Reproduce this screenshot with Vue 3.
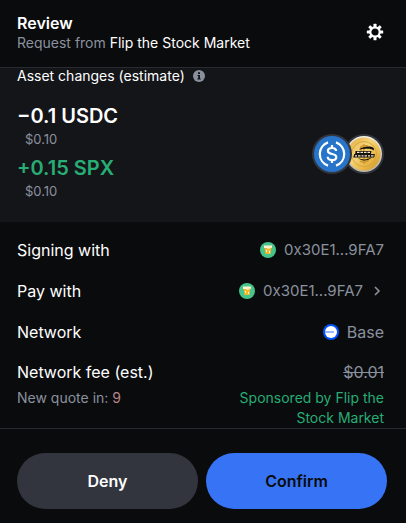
<script setup>
const changes = [
  { amount: '−0.1 USDC', value: '$0.10', gain: false },
  { amount: '+0.15 SPX', value: '$0.10', gain: true },
]
const address = '0x30E1...9FA7'
const teeth = [0, 45, 90, 135, 180, 225, 270, 315]
</script>

<template>
  <main class="review">
    <header class="header">
      <div>
        <h1 class="title">Review</h1>
        <p class="origin">Request from <span>Flip the Stock Market</span></p>
      </div>
      <button class="settings" type="button" aria-label="Settings">
        <svg width="18" height="18" viewBox="0 0 18 18" fill="#fff">
          <rect v-for="a in teeth" :key="a" x="7.5" y=".8" width="3" height="4" rx=".5" :transform="`rotate(${a} 9 9)`" />
          <circle cx="9" cy="9" r="4.7" fill="none" stroke="#fff" stroke-width="2.2" />
        </svg>
      </button>
    </header>

    <section class="assets">
      <h2 class="assets-title">
        Asset changes (estimate)
        <svg width="12" height="12" viewBox="0 0 12 12">
          <circle cx="6" cy="6" r="6" fill="#8a919e" />
          <path d="M5 2.3h2v1.6H5zM4.5 5H7v3.5h.8v1H4.3v-1h.9V6h-.7z" fill="#141519" />
        </svg>
      </h2>
      <div class="assets-body">
        <ul class="changes">
          <li v-for="c in changes" :key="c.amount">
            <p class="amount" :class="{ gain: c.gain }">{{ c.amount }}</p>
            <p class="value">{{ c.value }}</p>
          </li>
        </ul>
        <div class="coins">
          <svg class="coin front" width="40" height="40" viewBox="0 0 40 40">
            <circle cx="20" cy="20" r="20" fill="#32353d" />
            <circle cx="20" cy="20" r="18" fill="#2775ca" />
            <g fill="none" stroke="#fff" stroke-width="2.2">
              <path d="M16 8.4a12.3 12.3 0 0 0 0 23.2M24 8.4a12.3 12.3 0 0 1 0 23.2" />
              <path d="M20 11v3M20 26v3M24.2 17c-.2-2-1.8-3-4.2-3s-4.1 1.1-4.1 3c0 4.3 8.4 1.7 8.4 6 0 2-1.7 3.1-4.2 3.1s-4.3-1.2-4.4-3.3" />
            </g>
          </svg>
          <svg class="coin" width="40" height="40" viewBox="0 0 40 40">
            <defs>
              <linearGradient id="gold" x1="0" y1="0" x2="1" y2="1">
                <stop offset="0" stop-color="#e0a63a" />
                <stop offset=".4" stop-color="#f6d67a" />
                <stop offset=".7" stop-color="#e9b746" />
                <stop offset="1" stop-color="#c88f25" />
              </linearGradient>
              <linearGradient id="rim" x1="0" y1="0" x2="0" y2="1">
                <stop offset="0" stop-color="#f2f0e8" />
                <stop offset="1" stop-color="#b9b4a6" />
              </linearGradient>
            </defs>
            <circle cx="20" cy="20" r="20" fill="#32353d" />
            <circle cx="20" cy="20" r="18" fill="url(#rim)" />
            <circle cx="20" cy="20" r="16.6" fill="url(#gold)" />
            <circle cx="20" cy="20" r="12.5" fill="none" stroke="#d19e35" stroke-width=".8" />
            <path d="M20 10v20M24 12c-6-2-10 2-6 5M16 27c5 3 11 0 7-4" fill="none" stroke="#cf9930" stroke-width="1.5" />
            <path d="M15 15.500c4-3 9-3.500 13-2.500 2 .7 2.500 2 1.500 3.500-1-2-7-2.500-14.500-1z" fill="#17130d" />
            <path d="M11.500 17h16l-.6 3h4l-.7 3.500h-21l1-3.500h1z" fill="#17130d" />
            <path d="M14 24c4 2 10 2 14-1-3 4-9 5-14 1z" fill="#17130d" />
            <path d="M13 18.400h2.500M16.500 18.400h2.500M20 18.400h2.500M23.500 18.400h2.500M11 21.800h2M14 21.800h2.500M17.500 21.800h2M20.500 21.800h2.500M24 21.800h2M27 21.800h2.500" stroke="#f3ead0" stroke-width="1.2" />
          </svg>
        </div>
      </div>
    </section>

    <section class="details">
      <div class="row">
        <span>Signing with</span>
        <span class="info address">
          <svg width="16" height="16" viewBox="0 0 16 16">
            <circle cx="8" cy="8" r="8" fill="#45c58b" />
            <path d="M4.5 5h7l-1 7h-5z" fill="#f9b62c" />
            <path d="M4 3.5h8v2.2H9.7v1H7.5V6H4z" fill="#fff2cf" />
            <path d="M6 8h1v2H6zM9 9h1v2H9z" fill="#fff2cf" />
          </svg>
          {{ address }}
        </span>
      </div>
      <div class="row">
        <span>Pay with</span>
        <button class="info address" type="button">
          <svg width="16" height="16" viewBox="0 0 16 16">
            <circle cx="8" cy="8" r="8" fill="#45c58b" />
            <path d="M4.5 5h7l-1 7h-5z" fill="#f9b62c" />
            <path d="M4 3.5h8v2.2H9.7v1H7.5V6H4z" fill="#fff2cf" />
            <path d="M6 8h1v2H6zM9 9h1v2H9z" fill="#fff2cf" />
          </svg>
          {{ address }}
          <svg width="13" height="12" viewBox="0 0 13 12" fill="none" stroke="#8a919e" stroke-width="1.6">
            <path d="M4 2l4 4-4 4" />
          </svg>
        </button>
      </div>
      <div class="row">
        <span>Network</span>
        <span class="info">
          <svg width="16" height="16" viewBox="0 0 16 16">
            <circle cx="8" cy="8" r="8" fill="#0052ff" />
            <circle cx="8" cy="8" r="6" fill="#fff" />
            <path d="M2 8h9" stroke="#7fa6ff" stroke-width="1.6" />
          </svg>
          Base
        </span>
      </div>
      <div class="row fee">
        <span>Network fee (est.)</span>
        <s class="info">$0.01</s>
      </div>
      <div class="notes">
        <span class="quote">New quote in: <span class="count">9</span></span>
        <span class="sponsor">Sponsored by Flip the Stock Market</span>
      </div>
    </section>

    <footer class="actions">
      <button class="action deny" type="button">Deny</button>
      <button class="action confirm" type="button">Confirm</button>
    </footer>
  </main>
</template>

<style>
body {
  background: #0a0b0d;
}
</style>

<style scoped>
.review {
  color: #fff;
  font-family: Inter, "Liberation Sans", sans-serif;
  font-size: 16px;
  line-height: 24px;
}
h1, h2, p, ul {
  margin: 0;
  padding: 0;
  list-style: none;
}
button {
  border: 0;
  padding: 0;
  background: none;
  color: inherit;
  font: inherit;
  cursor: pointer;
}
svg {
  display: block;
  flex: none;
}
.header {
  display: flex;
  align-items: center;
  justify-content: space-between;
  padding: 12px 22px 15px 17px;
  border-bottom: 1px solid #282b31;
}
.title {
  font-size: 16px;
  font-weight: 600;
  line-height: 22px;
}
.origin {
  color: #8a919e;
  font-size: 14px;
  line-height: 18px;
}
.origin span {
  color: #fff;
}
.assets {
  padding-bottom: 22px;
  background: #141519;
}
.assets-title {
  display: flex;
  align-items: center;
  gap: 8px;
  padding-left: 17px;
  font-size: 14px;
  font-weight: 400;
  line-height: 16px;
}
.assets-body {
  display: flex;
  align-items: center;
  justify-content: space-between;
  padding: 18px 22px 0 17px;
}
.changes {
  display: grid;
  gap: 6px;
}
.amount {
  font-size: 20px;
  font-weight: 600;
  line-height: 28px;
}
.gain {
  color: #27ad75;
}
.value {
  padding-left: 8px;
  color: #8a919e;
  font-size: 13px;
  line-height: 18px;
}
.coins {
  display: flex;
  padding-top: 6px;
}
.coin + .coin {
  margin-left: -8px;
}
.front {
  z-index: 1;
}
.details {
  padding: 7px 22px 0 17px;
}
.row {
  display: flex;
  align-items: center;
  justify-content: space-between;
  box-sizing: border-box;
  height: 41px;
}
.info {
  display: flex;
  align-items: center;
  gap: 8px;
  color: #8a919e;
}
.address {
  font-size: 15px;
}
.fee {
  height: 36px;
  padding-top: 4px;
}
.notes {
  display: flex;
  justify-content: space-between;
  font-size: 14px;
  line-height: 20px;
}
.quote {
  color: #8a919e;
}
.count {
  color: #b78488;
}
.sponsor {
  width: 160px;
  color: #27ad75;
  text-align: right;
}
.actions {
  display: flex;
  gap: 8px;
  padding: 24px 19px 14px 17px;
  border-top: 1px solid #282b31;
}
.action {
  flex: 1;
  height: 56px;
  border-radius: 28px;
  font-weight: 600;
}
.deny {
  background: #32353d;
}
.confirm {
  background: #3773f5;
  color: #0a0b0d;
}
</style>
